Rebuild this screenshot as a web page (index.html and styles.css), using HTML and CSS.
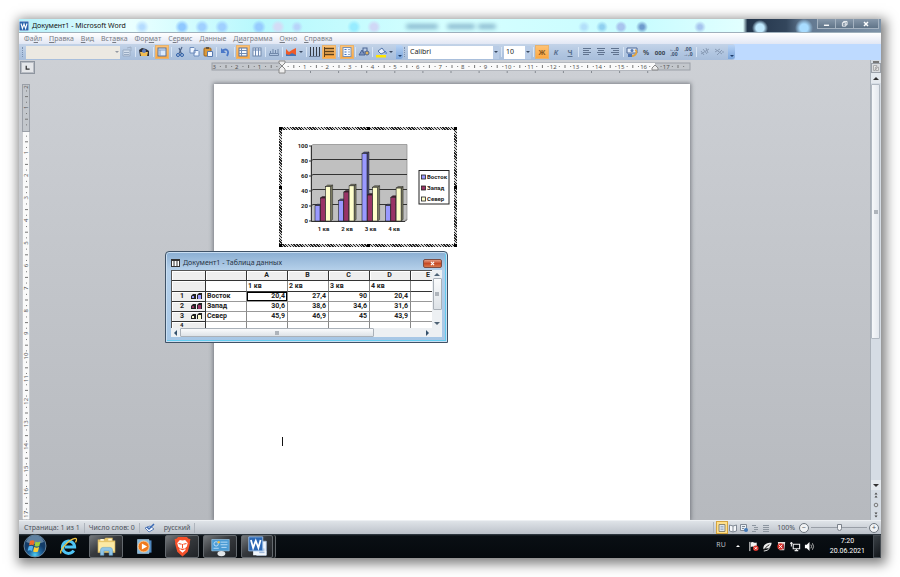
FILE: index.html
```html
<!DOCTYPE html>
<html lang="ru">
<head>
<meta charset="utf-8">
<title>Документ1 - Microsoft Word</title>
<link rel="stylesheet" href="styles.css">
</head>
<body>
<div class="screen">
  <header class="titlebar">
    <svg class="app-icon" viewBox="0 0 10 10"><rect width="10" height="10" fill="#e9f2fb"/><rect x=".5" y=".5" width="9" height="9" fill="#2b65ad"/><path d="M2 2.5l1.4 5 1.6-4.5 1.6 4.5L8 2.5" fill="none" stroke="#fff" stroke-width="1.1"/></svg>
    <h1>Документ1 - Microsoft Word</h1>
    <svg class="glow" viewBox="0 0 120 13"><g fill="#79a9c4"><rect x="5" y="5" width="32" height="5" rx="2"/><rect x="46" y="5" width="28" height="5" rx="2"/><rect x="77" y="5" width="18" height="5" rx="2"/></g></svg>
    <div class="window-buttons">
      <button aria-label="Свернуть"><svg viewBox="0 0 20 10"><path d="M7 6.5h6" stroke="#fff" stroke-width="1.6"/></svg></button>
      <button aria-label="Восстановить"><svg viewBox="0 0 20 10"><path d="M7.500 3.500h4v4h-4zM9 3.500v-1.500h4v4h-1.500M9 5.500h1" fill="none" stroke="#fff"/></svg></button>
      <button aria-label="Закрыть" class="close"><svg viewBox="0 0 20 10"><path d="M8 3l4 4M12 3l-4 4" stroke="#fff" stroke-width="1.500"/></svg></button>
    </div>
  </header>

  <nav class="menu">
    <button>Фа<u>й</u>л</button><button><u>П</u>равка</button><button><u>В</u>ид</button><button>Вст<u>а</u>вка</button><button>Фор<u>м</u>ат</button><button>С<u>е</u>рвис</button><button><u>Д</u>анные</button><button>Д<u>и</u>аграмма</button><button><u>О</u>кно</button><button><u>С</u>правка</button>
  </nav>

  <div class="toolbar">
    <div class="bar">
      <i class="handle"></i>
      <span class="combo area"><select aria-label="Элементы диаграммы" disabled><option></option></select><i class="arrow"></i></span>
      <button aria-label="Формат" class="dim"><svg viewBox="0 0 14 14"><path d="M3 5h7v6H3z" fill="#e6ecf4" stroke="#8d9db3"/><path d="M4 7.500h5M4 9.500h5M7 3l4-1v4" stroke="#8d9db3" fill="none"/></svg></button>
      <i class="sep"></i>
      <button aria-label="Импорт файла"><svg viewBox="0 0 14 14"><path d="M2 5l3-2 4 1 3 2v5H3z" fill="#2d2d33"/><path d="M3 7h8l-1 4H4z" fill="#f0bd55"/><circle cx="7" cy="6" r="2" fill="#5b7cc0"/></svg></button>
      <i class="sep wide"></i>
      <button class="on" aria-label="Режим таблицы"><svg viewBox="0 0 14 14"><rect x="3" y="3" width="8" height="8" fill="#dceafc" stroke="#54709c"/><path d="M3 5h8M5 5v6" stroke="#7f9cc8"/></svg></button>
      <i class="sep wide"></i>
      <button aria-label="Вырезать"><svg viewBox="0 0 14 14"><path d="M9 2L6 8.500M6 3l2.500 6" stroke="#4d6388" stroke-width="1.200"/><circle cx="5" cy="10" r="1.500" fill="none" stroke="#2f5fa8"/><circle cx="9" cy="10" r="1.500" fill="none" stroke="#2f5fa8"/></svg></button>
      <button aria-label="Копировать"><svg viewBox="0 0 14 14"><path d="M3 2.500h4l1 1V8H3zM7 5.500h4l1 1V11H7z" fill="#eef5ff" stroke="#6c8bbb"/></svg></button>
      <button aria-label="Вставить"><svg viewBox="0 0 14 14"><rect x="3" y="3" width="7" height="8" rx="1" fill="#dc9a3a" stroke="#9b6521"/><path d="M5 2h3v2H5z" fill="#65533c"/><path d="M6.500 6.500h5v5h-5z" fill="#f5f9ff" stroke="#587ab0"/></svg></button>
      <i class="sep"></i>
      <button aria-label="Отменить"><svg viewBox="0 0 14 14"><path d="M4 6c4-3 8-1 5 5" fill="none" stroke="#4a78c8" stroke-width="1.800"/><path d="M3 3v5h5z" fill="#4a78c8"/></svg></button>
      <i class="sep wide"></i>
      <button class="on" aria-label="По строкам"><svg viewBox="0 0 14 14"><rect x="3" y="3" width="8" height="8" fill="#f4f8ff" stroke="#54709c"/><path d="M3 5.500h8M3 8.500h8M5.500 3v8" stroke="#6f8ab3"/></svg></button>
      <button aria-label="По столбцам"><svg viewBox="0 0 14 14"><rect x="3" y="3" width="8" height="8" fill="#f4f8ff" stroke="#7188aa"/><path d="M5.500 3v8M8.500 3v8M3 5h8" stroke="#6f8ab3"/></svg></button>
      <i class="sep"></i>
      <button aria-label="Таблица данных"><svg viewBox="0 0 14 14"><path d="M3.500 8V6M6 8V4M8.500 8V5M11 8V4M2.500 8.500h9v2h-9z" fill="none" stroke="#7188aa"/></svg></button>
      <i class="sep"></i>
      <button aria-label="Тип диаграммы"><svg viewBox="0 0 14 14"><path d="M2 11V4l3 3 3-2 4-2v8z" fill="#ef5a27"/><path d="M2 11V9l3 1 3-2 4 2v1z" fill="#4274b8"/></svg></button><i class="arrow"></i>
      <i class="sep wide"></i>
      <button aria-label="Линии оси X"><svg viewBox="0 0 14 14"><path d="M2.500 2v9M5.500 2v9M8.500 2v9M11.500 2v9" stroke="#363b43"/><path d="M1 11.500h11" stroke="#6a7b95"/></svg></button>
      <button class="on" aria-label="Линии оси Y"><svg viewBox="0 0 14 14"><path d="M2 3.500h10M2 6.500h10M2 9.500h10" stroke="#5e401a" stroke-width="1.300"/><path d="M2.500 2v10" stroke="#5e401a"/></svg></button>
      <i class="sep wide"></i>
      <button class="on" aria-label="Легенда"><svg viewBox="0 0 14 14"><rect x="3" y="2.500" width="8" height="9" fill="#f4f8ff" stroke="#7991b5"/><path d="M4.500 4.500h2M4.500 7h2M4.500 9.500h2" stroke="#3f73c4"/><path d="M8 4.500h2M8 7h2M8 9.500h2" stroke="#99a9bd"/></svg></button>
      <i class="sep"></i>
      <button aria-label="Рисование"><svg viewBox="0 0 14 14"><path d="M2 10l3-5 3 5z" fill="#7d94bd" stroke="#4b6594"/><rect x="6" y="3" width="4" height="4" fill="#b9cbe6" stroke="#4b6594"/><circle cx="10" cy="8" r="2" fill="#dfb15b" stroke="#4b6594"/></svg></button>
      <i class="sep"></i>
      <button aria-label="Цвет заливки"><svg viewBox="0 0 14 14"><path d="M4 6l4-3 3 4-4 2z" fill="#e8f0fb" stroke="#5273aa"/><path d="M11 6q2 2 1 3" stroke="#3f73c4" fill="none"/><path d="M2 10h10v2.500H2z" fill="#ffe500"/></svg></button><i class="arrow"></i>
      <i class="overflow"></i>
      <i class="handle"></i>
      <span class="combo font"><select aria-label="Шрифт"><option>Calibri</option></select><i class="arrow"></i></span>
      <i class="sep wide"></i><i class="sep blank"></i>
      <span class="combo size"><select aria-label="Размер шрифта"><option>10</option></select><i class="arrow"></i></span>
      <i class="sep wide"></i>
      <button class="on text">Ж</button><button class="text"><em>К</em></button><button class="text"><u>Ч</u></button>
      <i class="sep"></i>
      <button aria-label="По левому краю"><svg viewBox="0 0 14 14"><path d="M3 3.500h8M3 5.500h6M3 7.500h8M3 9.500h6" stroke="#60738f"/></svg></button>
      <button aria-label="По центру"><svg viewBox="0 0 14 14"><path d="M3 3.500h8M4 5.500h6M3 7.500h8M4 9.500h6" stroke="#60738f"/></svg></button>
      <button aria-label="По правому краю"><svg viewBox="0 0 14 14"><path d="M3 3.500h8M5 5.500h6M3 7.500h8M5 9.500h6" stroke="#60738f"/></svg></button>
      <i class="sep"></i>
      <button aria-label="Денежный формат"><svg viewBox="0 0 14 14"><path d="M2 3h10v5H2z" fill="#e1ebf8" stroke="#506b98"/><circle cx="7" cy="5.500" r="1.500" fill="#5176b2"/><path d="M10 5c3 1 1 6-3 6" fill="none" stroke="#e0a23f" stroke-width="1.800"/><path d="M3 9h4v3H3z" fill="#5176b2"/></svg></button>
      <button class="text dark">%</button><button class="text dark tiny">000</button>
      <button aria-label="Увеличить разрядность" class="text digits"><span>←,0</span><span>,00</span></button>
      <button aria-label="Уменьшить разрядность" class="text digits"><span>,00</span><span>→,0</span></button>
      <i class="sep"></i>
      <button aria-label="Текст снизу вверх" class="dim"><svg viewBox="0 0 14 14"><path d="M3 6l3 4M5 4l4 5M8 3l2 5M3 9l8-5" stroke="#71839d" fill="none"/></svg></button>
      <button aria-label="Текст сверху вниз" class="dim"><svg viewBox="0 0 14 14"><path d="M3 4l7 5M3 7l5-3M5 10l5-5M10 7h2" stroke="#71839d" fill="none"/></svg></button>
      <i class="overflow"></i>
    </div>
  </div>

  <main class="workspace">
    <div class="canvas">
      <div class="ruler-row">
        <button class="tab-kind" aria-label="Вид табуляции"><svg viewBox="0 0 13 13"><path d="M5 4.500v4h4" fill="none" stroke="#333" stroke-width="1.500"/></svg></button>
        <svg class="h-ruler" id="h-ruler" viewBox="0 0 478 15"></svg>
      </div>
      <div class="desk">
        <svg class="v-ruler" id="v-ruler" viewBox="0 0 8 436"></svg>
        <article class="page">
          <figure class="chart"><svg id="chart" viewBox="0 0 178 120" role="img" aria-label="Диаграмма"></svg></figure>
          <i class="caret"></i>
        </article>
      </div>
    </div>
    <div class="scroll">
      <i class="split"></i>
      <button class="ruler-toggle" aria-label="Линейка"><svg viewBox="0 0 10 10"><path d="M2 2h4v2H4v4H2zM5 6l3-2v4H5z" fill="#f7f7f7" stroke="#777" stroke-width=".7"/></svg></button>
      <button class="up" aria-label="Вверх"><i></i></button>
      <div class="thumb"><i></i></div>
      <button class="down" aria-label="Вниз"><i></i></button>
      <button aria-label="Предыдущая страница"><svg viewBox="0 0 10 10"><path d="M3.500 4.500L5 2.500l1.500 2zM3.500 7.500L5 5.500l1.500 2z" fill="#444"/></svg></button>
      <button aria-label="Объект перехода"><svg viewBox="0 0 10 10"><circle cx="5" cy="5" r="1.800" fill="none" stroke="#777"/></svg></button>
      <button aria-label="Следующая страница"><svg viewBox="0 0 10 10"><path d="M3.500 2.500L5 4.500l1.500-2zM3.500 5.500L5 7.500l1.500-2z" fill="#444"/></svg></button>
    </div>

    <section class="sheet">
      <header>
        <svg viewBox="0 0 9 8"><rect x=".5" y=".5" width="8" height="7" fill="#fff" stroke="#333"/><path d="M0 1.500h9M3 1v7M6 1v7" stroke="#333"/></svg>
        <h2>Документ1 - Таблица данных</h2>
        <button aria-label="Закрыть таблицу"><svg viewBox="0 0 19 9"><path d="M7.500 2.500l4 4M11.500 2.500l-4 4" stroke="#fff" stroke-width="1.500"/></svg></button>
      </header>
      <div class="sheet-body">
        <div class="grid">
          <table>
            <colgroup><col class="c-num"><col class="c-name"><col class="c-val"><col class="c-val"><col class="c-val"><col class="c-val"><col class="c-last"></colgroup>
            <thead><tr><th></th><th></th><th>A</th><th>B</th><th>C</th><th>D</th><th>E</th></tr></thead>
            <tbody>
              <tr class="cats"><th></th><td></td><td>1 кв</td><td>2 кв</td><td>3 кв</td><td>4 кв</td><td></td></tr>
              <tr><th>1<svg viewBox="0 0 12 8"><path d="M0 7V4l2-2h3v5zM6 7V3l2-2h3v6z" fill="#222"/><path d="M1 4h2v2H1z" fill="#9999ff"/><path d="M7 3h3v4H7z" fill="#9999ff"/></svg></th><td>Восток</td><td class="active">20,4</td><td>27,4</td><td>90</td><td>20,4</td><td></td></tr>
              <tr><th>2<svg viewBox="0 0 12 8"><path d="M0 7V4l2-2h3v5zM6 7V3l2-2h3v6z" fill="#222"/><path d="M1 4h2v2H1z" fill="#993366"/><path d="M7 3h3v4H7z" fill="#993366"/></svg></th><td>Запад</td><td>30,6</td><td>38,6</td><td>34,6</td><td>31,6</td><td></td></tr>
              <tr><th>3<svg viewBox="0 0 12 8"><path d="M0 7V4l2-2h3v5zM6 7V3l2-2h3v6z" fill="#222"/><path d="M1 4h2v2H1z" fill="#ffffcc"/><path d="M7 3h3v4H7z" fill="#ffffcc"/></svg></th><td>Север</td><td>45,9</td><td>46,9</td><td>45</td><td>43,9</td><td></td></tr>
              <tr class="partial"><th>4</th><td></td><td></td><td></td><td></td><td></td><td></td></tr>
            </tbody>
          </table>
        </div>
        <div class="s-vert"><i class="tri-up"></i><i class="s-thumb"></i><i class="tri-down"></i></div>
        <div class="s-horz"><i class="tri-left"></i><i class="s-thumb"></i><i class="tri-right"></i></div>
      </div>
    </section>
  </main>

  <footer class="status">
    <span>Страница: 1 из 1</span>
    <span>Число слов: 0</span>
    <span class="spell"><svg viewBox="0 0 12 10"><path d="M1 5l5-2 4 3-5 3z" fill="#f5f9ff" stroke="#5f80b5"/><path d="M3 4l2 2 5-5" fill="none" stroke="#3969b4" stroke-width="1.500"/></svg></span>
    <span>русский</span>
    <div class="views">
      <button class="on" aria-label="Разметка страницы"><svg viewBox="0 0 10 10"><path d="M2 1.500h6v7H2z" fill="#dce5ef" stroke="#8b8670"/><path d="M3.500 3.500h3M3.500 5h3M3.500 6.500h3" stroke="#899db5" stroke-width=".7"/></svg></button>
      <button aria-label="Режим чтения"><svg viewBox="0 0 10 10"><path d="M1.500 2l3.500 1 3.500-1v6L5 9 1.500 8zM5 3v6" fill="#f5f7fa" stroke="#808994"/></svg></button>
      <button aria-label="Веб-документ"><svg viewBox="0 0 10 10"><path d="M1.500 1.500h6v6h-6z" fill="#e9eff6" stroke="#808994"/><path d="M3 3.500h3M3 5.500h2" stroke="#808994"/><circle cx="7" cy="7" r="2" fill="#4379b8"/></svg></button>
      <button aria-label="Структура"><svg viewBox="0 0 10 10"><path d="M2 2.500h4M4 4.500h4M4 6.500h4M2 8.500h4" stroke="#8c959f"/></svg></button>
      <button aria-label="Черновик"><svg viewBox="0 0 10 10"><path d="M2 2.500h6M2 4.500h6M2 6.500h6M2 8.500h6" stroke="#8c959f"/></svg></button>
    </div>
    <span class="percent">100%</span>
    <button class="round" aria-label="Уменьшить">−</button>
    <input type="range" aria-label="Масштаб" min="0" max="100" value="50">
    <button class="round" aria-label="Увеличить">+</button>
  </footer>

  <div class="taskbar">
    <button class="start" aria-label="Пуск"><svg viewBox="0 0 24 24"><defs><radialGradient id="orb" cy=".9"><stop offset="0" stop-color="#4fd0f3"/><stop offset=".5" stop-color="#236ba5"/><stop offset="1" stop-color="#133c68"/></radialGradient></defs><circle cx="12" cy="12" r="11" fill="url(#orb)" stroke="#7893a9" stroke-width=".8"/><path d="M3 8a9.500 9.500 0 0 1 18 0Q12 12 3 8z" fill="#bcd4e6" opacity=".45"/><path d="M7 7q2.500-1.500 4.500 0l-1 4.500q-2-1.500-4.500 0z" fill="#ef6a2c"/><path d="M12.500 7.500q2 1.300 5 0l-1.200 4.500q-2.600 1.200-4.800 0z" fill="#9bcf3d"/><path d="M5.700 12.500q2.500-1.500 4.500 0L9 17q-2-1.500-4.300-.2z" fill="#55b2ef"/><path d="M11.200 13q2.300 1.400 4.900 0L15 17.500q-2.500 1.200-4.900 0z" fill="#ffd035"/></svg></button>
    <button class="task" aria-label="Internet Explorer"><svg viewBox="0 0 24 24"><path d="M18 16.500a7 7 0 1 1 1-4H7.500" fill="none" stroke="#4ec4f4" stroke-width="3.400"/><path d="M3.500 20C1 17 12 4 19.500 2.700c2.500-.4 1.500 3 .5 4.500" fill="none" stroke="#f4c743" stroke-width="1.500"/></svg></button>
    <button class="task open" aria-label="Проводник"><svg viewBox="0 0 24 24"><path d="M2 4h7l2-2h8v3h3v14H2z" fill="#e7c66c"/><path d="M3 7h18v10H3z" fill="#fbe9a5"/><path d="M5 4.500h4M14 4h4" stroke="#fff8d9" stroke-width="2"/><path d="M5 22v-5q0-4 3-4h8q3 0 3 4v5h-4v-5H9v5z" fill="#8fc5e7" stroke="#5c9dcb" stroke-width=".6"/></svg></button>
    <button class="task" aria-label="Проигрыватель"><svg viewBox="0 0 24 24"><path d="M8 5h12v14H8z" fill="#4e86bd"/><path d="M4 4h13v16H4z" fill="#86b9dd" stroke="#bfdef1" stroke-width=".6"/><circle cx="11" cy="12" r="6.300" fill="#ef7a1e" stroke="#ffd3a0"/><path d="M9 8.500l6 3.500-6 3.500z" fill="#fff"/></svg></button>
    <button class="task open" aria-label="Brave"><svg viewBox="0 0 24 24"><path d="M7 1h10l2 2 2 .5-.7 4 .2 1L18 18 12 23.500 6 18 3.500 8.500l.2-1-.7-4L5 3z" fill="#f6512b"/><path d="M12 5l3-.5 3 3.500-1 4-2 2 .5 2L12 19l-3.500-3L9 14l-2-2-1-4 3-3.500z" fill="#fff"/><path d="M7.500 8.500l3.500 1M16.500 8.500l-3.500 1M12 9v5M9.500 14.500l2.500 1 2.500-1" stroke="#f6512b" stroke-width="1.200" fill="none"/></svg></button>
    <button class="task open" aria-label="Панель управления"><svg viewBox="0 0 24 24"><path d="M2 4h20v13H2z" fill="#4b9bd4" stroke="#a7d1ee" stroke-width=".7"/><circle cx="7" cy="9" r="2.500" fill="none" stroke="#c6e5fb"/><path d="M12 7h8M12 10h8M4 14h6M13 13h6" stroke="#c6e5fb"/><circle cx="10" cy="7" r="1.400" fill="#f0bd43"/><ellipse cx="13" cy="20" rx="4.500" ry="3" fill="#e2e6e9"/></svg></button>
    <button class="task open stack" aria-label="Word"><svg viewBox="0 0 24 24"><path d="M11 6h11v16H11z" fill="#f2f6fb" stroke="#a8bedb"/><path d="M7 17h15v5H7z" fill="#f2f6fb"/><path d="M14 15h6M14 17h6M14 19h6" stroke="#89a8d1"/><path d="M2 1h16v16H2z" fill="#2c68b5" stroke="#9dc0ea"/><path d="M4.500 4.500l2.500 9 3-8 3 8 2.500-9" fill="none" stroke="#fff" stroke-width="2"/></svg></button>
    <div class="tray">
      <span class="lang">RU</span>
      <i class="tri-up"></i>
      <svg viewBox="0 0 12 12"><path d="M2 1v10" stroke="#fff"/><path d="M3 1.500q2-1 3.500 0t3 0v5q-1.500 1-3 0T3 6.500z" fill="#f2f2f2"/><circle cx="8.500" cy="8" r="3" fill="#db342b"/><path d="M7.300 6.800l2.400 2.400M9.700 6.800L7.300 9.200" stroke="#fff"/></svg>
      <svg viewBox="0 0 12 12"><path d="M1.500 9C1 4 5 2 10.500 2 10 7 7 8.500 4 8" fill="#eee"/><path d="M1.500 11Q4 6 8 4" stroke="#222" fill="none"/><path d="M2 11Q7 11 8.500 7" stroke="#eee" fill="none"/></svg>
      <svg viewBox="0 0 12 12"><path d="M2 1h8l-1 9H4z" fill="#e5e0de"/><circle cx="5" cy="6" r="3.500" fill="#d92d25"/><path d="M3 4l4 4M7 4L3 8" stroke="#fff"/><path d="M8 3v6" stroke="#823" /></svg>
      <svg viewBox="0 0 12 12"><path d="M3.500 3.500h7v5h-7zM5 10.500h4M7 8.500v2M1.500 1v5M0 2.500h3" fill="none" stroke="#eee" stroke-width="1.200"/></svg>
      <svg viewBox="0 0 12 12"><path d="M1 4h2l3-3v10L3 8H1z" fill="#fff"/><path d="M7.500 4q1.500 2 0 4M9.200 2.500q2.500 3.500 0 7" fill="none" stroke="#bbb"/></svg>
      <div class="clock"><time>7:20</time><span>20.06.2021</span></div>
      <button class="show-desktop" aria-label="Свернуть все окна"></button>
    </div>
  </div>
</div>
<script src="script.js"></script>
</body>
</html>
```
FILE: styles.css
```css
* { box-sizing: border-box; }
html { height: 100%; }
body {
  margin: 0;
  padding: 19px;
  height: 100%;
  background: #fff;
  font: 7px/10px "Noto Sans", "Open Sans", sans-serif;
  color: #333;
}
button { margin: 0; padding: 0; border: 0; background: none; font: inherit; color: inherit; }
svg { display: block; }
h1, h2 { margin: 0; font-size: 7px; font-weight: 400; }

.screen {
  height: 100%;
  display: flex;
  flex-direction: column;
  box-shadow: 2px 3px 11px 3px rgba(0, 0, 0, .5);
}

/* Title bar */
.titlebar {
  height: 13px;
  flex: none;
  display: flex;
  align-items: center;
  padding: 0 2px 0 0;
  color: #111;
  background:
    radial-gradient(circle at 123px 8px, #b5dcff 2px, transparent 7px),
    radial-gradient(circle at 163px 8px, #8fc8ff 3px, transparent 7px),
    radial-gradient(circle at 183px 8px, #a0d0ff 3px, transparent 7px),
    radial-gradient(circle at 203px 8px, #a0d0ff 3px, transparent 7px),
    radial-gradient(circle at 240px 8px, #96ccff 3px, transparent 7px),
    radial-gradient(circle at 259px 8px, #d4dcf6 3px, transparent 7px),
    radial-gradient(circle at 278px 8px, #b8d4fa 2px, transparent 6px),
    radial-gradient(circle at 335px 8px, #98ecff 3px, transparent 7px),
    radial-gradient(circle at 355px 8px, #d0d8f6 3px, transparent 7px),
    radial-gradient(circle at 565px 8px, #b3e0fa 2px, transparent 6px),
    radial-gradient(circle at 583px 8px, #90d0f0 2px, transparent 6px),
    radial-gradient(circle at 602px 8px, #a9c4ee 3px, transparent 6px),
    radial-gradient(circle at 623px 8px, #6e9bcd 2px, transparent 6px),
    radial-gradient(circle at 681px 8px, #a6c4ee 2px, transparent 6px),
    radial-gradient(circle at 741px 9px, #c0eaff 4px, transparent 8px),
    radial-gradient(circle at 785px 9px, #a8dcff 4px, transparent 9px),
    linear-gradient(90deg, #b4f0fa, #eaffff 13%, #b6f8fd 28%, #d6ffff 50%, #c8fcff 72%, #e2ffff 84%, #22344a 84.5%, #33465c 89%, #61778f 91%, #7d92a7);
}
.app-icon { width: 10px; height: 10px; margin-right: 3px; }
.glow { width: 120px; height: 13px; margin-left: 275px; filter: blur(2px); opacity: .8; }
.window-buttons { display: flex; margin-left: auto; align-self: flex-start; }
.window-buttons button {
  width: 18px; height: 10px;
  border: 1px solid #a4b2c0; border-top: 0; border-right: 0;
  background: linear-gradient(#8798aa, #607488);
}
.window-buttons .close { width: 26px; border-right: 1px solid #a4b2c0; }
.window-buttons svg { width: 100%; height: 10px; }

/* Menu */
.menu {
  height: 12px;
  flex: none;
  display: flex;
  gap: 7px;
  padding-left: 5px;
  align-items: center;
  border-top: 1px solid #9fb0bc;
  background: linear-gradient(#fff, #e2e7f4);
  color: #777b84;
}
.menu u { text-underline-offset: 1px; }

/* Toolbar */
.toolbar { height: 16px; flex: none; background: #bedaff; display: flex; }
.bar {
  display: flex;
  align-items: center;
  padding-left: 2px;
  background: linear-gradient(#c3d3e8, #b0c5e0 60%, #a8bedb);
  border-radius: 0 3px 3px 0;
}
.bar button { width: 14px; height: 14px; flex: none; }
.bar button svg { width: 14px; height: 14px; }
.bar .on { background: linear-gradient(#ffc477, #fba63f); box-shadow: inset 0 0 0 1px #e6b370; }
.bar .dim { opacity: .65; }
.bar .text { color: #59708f; font-weight: 700; font-size: 7px; line-height: 13px; }
.bar .on.text { color: #8a5a20; }
.bar .dark { color: #333c4a; font-weight: 600; }
.bar .tiny { font: 700 6px/13px Roboto, sans-serif; }
.bar .digits { font-size: 5px; line-height: 5px; color: #3e5272; }
.digits span { display: block; }
.handle { width: 2px; height: 10px; margin: 0 2px 0 1px; border-left: 1px dotted #7c92b2; }
.sep { width: 1px; height: 10px; margin: 0 1px; background: #d8e5f5; flex: none; }
.sep.wide { margin-left: 2px; }
.sep.blank { margin: 0; background: none; }
.arrow { width: 6px; display: flex; justify-content: center; flex: none; }
.arrow::after { content: ""; border: 2px solid transparent; border-top-color: #3a4a62; border-bottom: 0; }
.overflow {
  width: 7px; height: 14px; margin-left: 2px; display: flex; align-items: flex-end; justify-content: center;
  padding-bottom: 2px; background: linear-gradient(#b8d3f5, #7ba6dc); border-radius: 0 3px 3px 0;
}
.overflow::after { content: ""; border: 2px solid transparent; border-top-color: #1f3d69; border-bottom: 0; }
.combo { display: flex; align-items: center; height: 13px; background: #fff; }
.combo select {
  flex: 1; min-width: 0; height: 13px; padding: 0 2px; border: 0;
  appearance: none; background: none; color: #222; font: 7px/12px "Noto Sans", sans-serif;
}
.combo .arrow { height: 13px; align-items: center; background: #b9cce6; }
.combo.area { width: 94px; background: #ece9e2; }
.combo.area .arrow { background: none; opacity: .5; }
.combo.font { width: 91px; }
.combo.size { width: 27px; }

/* Workspace */
.workspace {
  position: relative;
  flex: 1;
  min-height: 0;
  display: flex;
  background: linear-gradient(#cdd0d5, #b6b9be);
}
.canvas { flex: 1; min-width: 0; display: flex; flex-direction: column; }
.ruler-row { display: flex; justify-content: space-between; align-items: flex-start; height: 24px; flex: none; padding: 1px 0 0 1px; }
.tab-kind { width: 15px; height: 13px; border: 1px solid #8e959f; background: #e4e6e9; box-shadow: inset 0 0 0 1px #b9bdc4; }
.tab-kind svg { width: 13px; height: 11px; }
.h-ruler { width: 478px; height: 15px; margin: 1px auto 0 177px; overflow: visible; }
.desk { flex: 1; min-height: 0; display: flex; padding-left: 3px; }
.v-ruler { width: 8px; height: 436px; flex: none; }
.h-ruler text, .v-ruler text { font: 6px "Noto Sans", sans-serif; fill: #555; text-anchor: middle; }
.page {
  width: 476px;
  margin: 0 auto 0 184px;
  padding: 43px 0 0 65px;
  background: #fff;
  box-shadow: 0 0 4px 1px rgba(70, 75, 82, .6);
  clip-path: inset(-6px -6px 0 -6px);
}
.chart {
  width: 178px; margin: 0; padding: 3px;
  background: repeating-linear-gradient(45deg, #222 0 1px, #d5d5d5 1px 2px);
}
.chart svg { width: 172px; height: 114px; background: #fff; overflow: visible; }
.chart text { font: 700 6px Roboto, sans-serif; fill: #222; }
.caret { display: block; width: 1px; height: 9px; margin: 190px 0 0 3px; background: #111; }

.scroll { width: 11px; display: flex; flex-direction: column; background: #d5dce4; border-left: 1px solid #a9b0b8; }
.scroll button { height: 10px; flex: none; }
.scroll svg { width: 10px; height: 10px; }
.split { height: 2px; margin: 1px 2px 0; background: #777; flex: none; }
.scroll .ruler-toggle { border: 1px solid #9aa0a8; background: #dadcdf; }
.scroll .ruler-toggle svg { width: 8px; height: 8px; }
.scroll .up, .scroll .down { display: flex; justify-content: center; align-items: center; background: #e4e9ee; }
.up i, .down i, .tri-up, .tri-down { border: 3px solid transparent; border-bottom-color: #333; border-top: 0; }
.down i, .tri-down { border-top: 3px solid #333; border-bottom: 0; }
.thumb {
  flex: 0 0 255px; display: flex; align-items: center; justify-content: center; margin: 1px 1px auto 0;
  border: 1px solid #b1b9c2; border-radius: 1px; background: linear-gradient(90deg, #f6f8fa, #e3e8ee);
}
.thumb i { width: 4px; height: 4px; background: #aeb4bb; }

/* Datasheet window */
.sheet {
  position: absolute;
  left: 146px;
  top: 191px;
  width: 283px;
  height: 92px;
  padding: 0 5px 5px;
  display: flex;
  flex-direction: column;
  border: 1px solid #3f5266;
  border-radius: 4px 4px 0 0;
  background: linear-gradient(#8aaed2, #b5d0ea 20%, #a7c7e6);
  box-shadow: inset 0 0 0 1px #c9def2, inset -1px -1px 0 1px #63cdf0;
}
.sheet header { display: flex; align-items: center; height: 18px; padding: 4px 0 0; }
.sheet header svg { width: 9px; height: 8px; }
.sheet h2 { margin-left: 3px; color: #26323f; }
.sheet header button { width: 19px; height: 9px; margin-left: auto; border-radius: 2px; background: linear-gradient(#e49a82, #c64a25 50%, #d8784c); border: 1px solid #7c4c43; }
.sheet header button svg { width: 17px; height: 7px; }
.sheet-body { flex: 1; min-height: 0; display: grid; grid-template: 1fr 9px / 1fr 10px; background: #fff; }
.grid { overflow: hidden; border-left: 1px solid #555; border-top: 1px solid #555; }
.grid table { width: 275px; table-layout: fixed; border-collapse: separate; border-spacing: 0; color: #222; font: 700 7px/9px Roboto, sans-serif; }
.c-num { width: 34px; }
.c-name { width: 41px; }
.c-val { width: 41px; }
.c-last { width: 36px; }
.grid th, .grid td { height: 10px; padding: 0 2px 0 1px; overflow: hidden; white-space: nowrap; border-right: 1px solid #888; border-bottom: 1px solid #999; }
.grid th { background: #eee; border-color: #333; text-align: center; box-shadow: inset 1px 1px #fff; }
.grid tbody th { padding-left: 8px; text-align: left; }
.grid th svg { float: right; width: 12px; height: 8px; }
.grid td { text-align: right; }
.grid .cats td, .grid td:nth-child(2) { text-align: left; }
.grid .active { box-shadow: inset 0 0 0 1px #000; }
.grid .cats th, .grid .cats td { height: 11px; border-bottom-color: #333; }
.grid .partial th, .grid .partial td { height: 6px; font-size: 6px; line-height: 6px; border-bottom: 0; }
.s-vert, .s-horz { display: flex; align-items: center; background: #edf0f3; }
.s-vert { flex-direction: column; padding: 3px 0; }
.s-horz { grid-column: 1 / 3; padding: 0 13px 0 3px; }
.s-thumb { border: 1px solid #aab1b9; background: linear-gradient(#fafbfc, #dde2e7); border-radius: 1px; display: flex; align-items: center; justify-content: center; }
.s-thumb::after { content: ""; width: 4px; height: 4px; background: #aeb4bb; }
.s-vert .s-thumb { width: 9px; height: 32px; margin: 2px 0 auto; }
.s-horz .s-thumb { width: 194px; height: 9px; margin: 0 auto 0 3px; }
.sheet .tri-up { border-bottom-color: #4e6275; }
.sheet .tri-down { border-top-color: #4e6275; }
.tri-left, .tri-right { border: 3px solid transparent; border-right-color: #35516c; border-left: 0; }
.tri-right { border-left: 3px solid #35516c; border-right: 0; }

/* Status bar */
.status {
  height: 14px; flex: none; display: flex; align-items: center; padding: 0 2px 0 5px;
  border-top: 1px solid #edf0f3; background: linear-gradient(#dfe3e8, #bcc2ca); color: #4d535c;
}
.status > span { padding-right: 4px; margin-right: 4px; border-right: 1px solid #aeb4bc; }
.status .spell { border: 0; }
.spell svg { width: 12px; height: 10px; }
.views { display: flex; gap: 1px; margin-left: auto; border-left: 1px solid #aeb4bc; padding-left: 3px; }
.views button { width: 10px; height: 11px; }
.views svg { width: 10px; height: 10px; }
.views .on { background: #ffe08a; box-shadow: 0 0 0 1px #d4a440; }
.status .percent { margin: 0 4px 0 6px; padding: 0; border: 0; }
.round { display: flex; align-items: center; justify-content: center; width: 10px; height: 10px; border: 1px solid #6f7780; border-radius: 50%; line-height: 8px; background: #f0f2f4; }
.status input { appearance: none; width: 56px; height: 9px; margin: 0 2px; background: linear-gradient(#989ea6, #989ea6) center / 100% 1px no-repeat; }
.status input::-webkit-slider-thumb { appearance: none; width: 5px; height: 7px; border: 1px solid #7a818a; border-radius: 0 0 3px 3px; background: #f4f5f7; }

/* Taskbar */
.taskbar { height: 24px; flex: none; display: flex; align-items: center; gap: 4px; padding-left: 4px; background: linear-gradient(#39434c, #0a0f14 8%, #05090d); }
.start { width: 24px; height: 24px; }
.start svg { width: 24px; height: 24px; }
.task { width: 34px; height: 23px; display: flex; align-items: center; justify-content: center; border-radius: 2px; }
.task svg { width: 21px; height: 21px; }
.task.open { border: 1px solid #64696e; background: linear-gradient(145deg, #74787c, #36393d 45%, #202327); }
.task.stack { width: 32px; box-shadow: 2px 0 0 #15191d, 3px 0 0 #62676b; }
.tray { margin-left: auto; align-self: stretch; display: flex; align-items: center; gap: 3px; color: #fff; }
.tray svg { width: 11px; height: 11px; }
.lang { color: #b9bec3; margin: 0 7px 3px 0; }
.tray .tri-up { border-width: 0 2px 2px; border-bottom-color: #fff; margin-right: 5px; }
.clock { display: flex; flex-direction: column; align-items: center; margin: 0 5px 0 12px; font-family: Roboto, sans-serif; }
.show-desktop { width: 8px; height: 23px; border: 1px solid #454b51; background: linear-gradient(135deg, #3a4046, #12161a); }
```
FILE: script.js
```js
const NS = "http://www.w3.org/2000/svg";

function add(parent, name, attrs, text) {
  const el = document.createElementNS(NS, name);
  for (const key in attrs) el.setAttribute(key, attrs[key]);
  if (text !== undefined) el.textContent = text;
  parent.append(el);
  return el;
}

const CM = 22.6;

// Horizontal ruler: text area is white, the margins are grey.
function drawHorizontal(svg) {
  add(svg, "rect", { x: 0, y: 1, width: 478, height: 7, fill: "#c3c7cc", stroke: "#9ba0a8" });
  add(svg, "rect", { x: 70, y: 1, width: 373, height: 7, fill: "#fafafa" });
  for (let n = -3; n <= 17; n++) {
    const x = 70 + n * CM;
    if (n !== 0) add(svg, "text", { x: Math.max(x, 2), y: 7 }, Math.abs(n));
    for (const q of [0.25, 0.75]) add(svg, "rect", { x: x + q * CM, y: 4, width: 1, height: 1, fill: "#777" });
    add(svg, "rect", { x: x + CM / 2, y: 3, width: 1, height: 3, fill: "#777" });
  }
  for (let x = 98; x < 440; x += 28.1) add(svg, "rect", { x, y: 9, width: 1, height: 2, fill: "#868b92" });
  add(svg, "path", { d: "M67-1h6v2l-3 3-3-3zM70 4l3 3v4h-6V7z", fill: "#eee", stroke: "#888" });
  add(svg, "path", { d: "M443 3l3 3v2h-6V6z", fill: "#eee", stroke: "#888" });
}

function drawVertical(svg) {
  add(svg, "rect", { x: 0, y: 0, width: 8, height: 436, fill: "#fafafa", stroke: "#9ba0a8" });
  add(svg, "rect", { x: 0.5, y: 0.5, width: 7, height: 47, fill: "#c3c7cc", stroke: "#9ba0a8" });
  for (let n = -2; n <= 17; n++) {
    const y = 46 + n * CM;
    if (n !== 0) add(svg, "text", { transform: `translate(6 ${Math.max(y, 3)}) rotate(-90)` }, Math.abs(n));
    for (const q of [0.25, 0.75]) add(svg, "rect", { x: 4, y: y + q * CM, width: 1, height: 1, fill: "#777" });
    add(svg, "rect", { x: 3, y: y + CM / 2, width: 3, height: 1, fill: "#777" });
  }
}

const quarters = ["1 кв", "2 кв", "3 кв", "4 кв"];
const series = [
  { name: "Восток", color: "#9999ff", side: "#4d4d80", values: [20.4, 27.4, 90, 20.4] },
  { name: "Запад", color: "#993366", side: "#4d1a33", values: [30.6, 38.6, 34.6, 31.6] },
  { name: "Север", color: "#ffffcc", side: "#808066", values: [45.9, 46.9, 45, 43.9] }
];

function drawChart(svg) {
  svg.setAttribute("viewBox", "3 3 172 114");
  const base = 94;
  add(svg, "path", { d: "M34 17.5h94V92l-3 2H32V19z", fill: "#c0c0c0", stroke: "#888", "stroke-width": 0.7 });
  for (let v = 0; v <= 100; v += 20) {
    const y = base - v * 0.75;
    if (v > 0 && v < 100) add(svg, "path", { d: `M32 ${y}l2-1.500H128`, stroke: "#333", fill: "none" });
    add(svg, "path", { d: `M30 ${y}h3`, stroke: "#333" });
    add(svg, "text", { x: 29, y: y + 2, "text-anchor": "end" }, v);
  }
  add(svg, "path", { d: "M32.5 19V94.500H126l2-2", stroke: "#333", fill: "none" });
  quarters.forEach((label, i) => {
    const left = 36 + i * 23.5;
    series.forEach((s, k) => {
      const x = left + k * 5.300, h = s.values[i] * 0.75, y = base - h;
      add(svg, "path", { d: `M${x + 5} ${y}l2-1.500V${base - 1.5}l-2 1.500z`, fill: s.side, stroke: "#222", "stroke-width": 0.5 });
      add(svg, "path", { d: `M${x} ${y}l2-1.500h5l-2 1.500z`, fill: s.side, stroke: "#222", "stroke-width": 0.5 });
      add(svg, "rect", { x, y, width: 5, height: h, fill: s.color, stroke: "#222", "stroke-width": 0.6 });
    });
    add(svg, "text", { x: left + 8.5, y: 104, "text-anchor": "middle" }, label);
  });
  add(svg, "rect", { x: 140, y: 43.5, width: 30, height: 33.5, fill: "#fff", stroke: "#222" });
  series.forEach((s, k) => {
    const y = 50 + k * 11;
    add(svg, "rect", { x: 142.5, y: y - 2, width: 4, height: 4, fill: s.color, stroke: "#222", "stroke-width": 0.8 });
    add(svg, "text", { x: 148, y: y + 2 }, s.name);
  });
  for (const x of [0, 88, 175]) for (const y of [0, 59, 117]) {
    if (x === 88 && y === 59) continue;
    add(svg, "rect", { x, y, width: 3, height: 3, fill: "#000" });
  }
}

drawHorizontal(document.getElementById("h-ruler"));
drawVertical(document.getElementById("v-ruler"));
drawChart(document.getElementById("chart"));
```
